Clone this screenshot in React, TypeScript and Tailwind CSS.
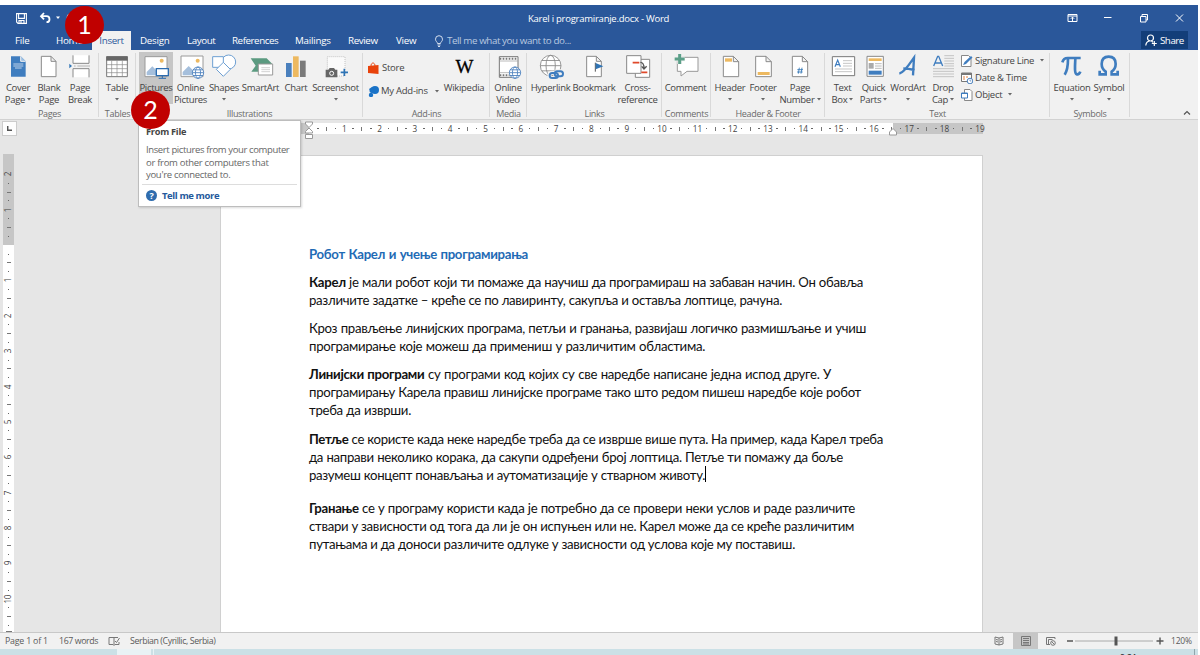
import React from "react";

type Kids = { children?: React.ReactNode };

const Icon = ({ x, children }: Kids & { x: number }) => (
  <svg className="h-[26px] w-[26px] shrink-0 overflow-visible" viewBox={`${x} 159 78 78`} fill="none" strokeWidth={3}>
    {children}
  </svg>
);

const Caret = ({ className = "" }: { className?: string }) => (
  <svg className={`inline-block h-[3px] w-[4px] shrink-0 ${className}`} viewBox="0 0 4 3">
    <path d="M0 0h4L2 2.6z" fill="#666" />
  </svg>
);

const Group = ({ label, w, children }: Kids & { label: string; w: string }) => (
  <div className={`relative flex h-[69px] shrink-0 flex-col ${w}`}>
    <div className="flex h-[57px] w-full">{children}</div>
    <div className="h-[12px] text-center text-[9px] leading-[13px] tracking-[-0.3px] text-[#6a6a6a]">{label}</div>
    <div className="absolute right-0 top-[3px] h-[64px] w-px bg-[#d9d9d9]" />
  </div>
);

const Btn = ({ w, a, b, arrow, active, children }: Kids & { w: string; a: string; b?: string; arrow?: boolean; active?: boolean }) => (
  <div className={`flex shrink-0 flex-col items-center ${active ? "mt-[2px] h-[52px] bg-[#c6c6c6] pt-[1px]" : "pt-[3px]"} ${w}`}>
    {children}
    <div className="mt-[2.5px] flex flex-col items-center whitespace-nowrap leading-[12.5px] tracking-[-0.3px]">
      <span>{a}</span>
      {b ? (
        <span>
          {b}
          {arrow && <Caret className="mb-[2px] ml-[2px]" />}
        </span>
      ) : (
        arrow && <Caret className="mt-[4px]" />
      )}
    </div>
  </div>
);

const Globe = ({ cx, cy, r, c = "#4a80bd" }: { cx: number; cy: number; r: number; c?: string }) => (
  <g stroke={c} strokeWidth={2.6}>
    <circle cx={cx} cy={cy} r={r} fill="#fff" />
    <ellipse cx={cx} cy={cy} rx={r * 0.45} ry={r} />
    <path d={`M${cx - r} ${cy}h${2 * r}M${cx - r * 0.87} ${cy - r * 0.5}h${r * 1.74}M${cx - r * 0.87} ${cy + r * 0.5}h${r * 1.74}`} />
  </g>
);

const hTicks = Array.from({ length: 76 }, (_, i) => i + 1);
const vTicks = Array.from({ length: 52 }, (_, i) => i - 8);

const Mark = ({ k, vertical }: { k: number; vertical?: boolean }) => {
  if (k === 0) return null;
  if (k % 4 === 0) return <span className={vertical ? "-rotate-90" : ""}>{Math.abs(k / 4)}</span>;
  if (k % 2 === 0) return <span className={vertical ? "h-px w-[4px] bg-[#777]" : "h-[4px] w-px bg-[#777]"} />;
  return <span className="h-px w-[1.5px] bg-[#666]" />;
};

const Line = ({ w, className = "", children }: Kids & { w: string; className?: string }) => (
  <div className={`h-[18.2px] whitespace-nowrap [text-align-last:justify] ${w} ${className}`}>{children}</div>
);

const Tab = ({ w, children }: Kids & { w: string }) => <span className={`shrink-0 whitespace-nowrap ${w}`}>{children}</span>;

export default function App() {
  return (
    <div className="relative flex h-[655px] w-[1200px] flex-col overflow-hidden bg-white pr-[2px] pt-[5px] font-['Open_Sans','Noto_Sans',sans-serif] text-[9.5px] tracking-[-0.25px] text-[#444]">
      <header className="flex h-[45px] shrink-0 flex-col bg-[#2a579a] text-white">
        <div className="flex h-[26px] items-center">
          <svg className="ml-[16px] h-[11px] w-[11px]" viewBox="0 0 11 11" fill="none" stroke="#fff" strokeWidth="1.1">
            <path d="M.6.6h9.8v9.8H2L.6 9zM2.6.6v4.8h5.8V.6M3 10.400V7.500h5v2.900M5 8v2" />
          </svg>
          <svg className="ml-[12px] h-[12px] w-[34px]" viewBox="0 0 34 12" fill="none" stroke="#fff" strokeWidth="1.8">
            <path d="M5 1L2 4.200l3 3.200M2 4.200h5.500c4 0 4 6 0 6" />
            <path d="M17 4.500h4l-2 2.500z" fill="#fff" stroke="none" />
            <path d="M31 2a4 4 0 0 0-1 7" strokeWidth="1.500" />
          </svg>
          <div className="ml-[455px] mt-[2px] w-[149px] whitespace-nowrap text-[9.5px]">Karel i programiranje.docx - Word</div>
          <svg className="ml-[390px] h-[12px] w-[118px]" viewBox="0 0 118 12" fill="none" stroke="#fff" strokeWidth="1">
            <path d="M1 2.500h9v7H1zM1 4h9M5.500 9V5.200M3.800 6.800l1.700-1.700 1.700 1.700M37 5.500h7.500M73.500 4.500h5.500v5.500h-5.500zM75 4V2.500h5.500V8H79M109 2.500l7 7M116 2.500l-7 7" />
          </svg>
        </div>
        <div className="flex h-[19px] text-[9.8px] leading-[19px]">
          <Tab w="ml-[15px] w-[41px]">File</Tab>
          <Tab w="w-[36px]">Home</Tab>
          <div className="w-[39px] shrink-0 bg-[#f1f1f1] text-center tracking-[-0.35px] text-[#2b579a]">Insert</div>
          <Tab w="ml-[9px] w-[47px]">Design</Tab>
          <Tab w="w-[45px] tracking-[-0.4px]">Layout</Tab>
          <Tab w="w-[63px] tracking-[-0.45px]">References</Tab>
          <Tab w="w-[53px]">Mailings</Tab>
          <Tab w="w-[48px] tracking-[-0.4px]">Review</Tab>
          <Tab w="w-[38px]">View</Tab>
          <svg className="mt-[4px] h-[12px] w-[10px]" viewBox="0 0 10 12" fill="none" stroke="#d5dfee">
            <path d="M3.500 8.500C3.500 7 1.500 6.500 1.500 4.200a3.500 3.500 0 0 1 7 0C8.500 6.500 6.500 7 6.500 8.500zM3.500 10h3M4 11.500h2" />
          </svg>
          <Tab w="ml-[3px] w-[130px] text-[#b9c9e0] tracking-[-0.42px]">Tell me what you want to do...</Tab>
          <div className="ml-[564px] flex h-[18px] w-[47px] items-center bg-[#133e79] pl-[4px] tracking-[-0.5px]">
            <svg className="mr-[3px] h-[12px] w-[12px]" viewBox="0 0 12 12" fill="none" stroke="#fff" strokeWidth="1.200">
              <circle cx="5.500" cy="4" r="3" />
              <path d="M.8 11.500C1 9 2.500 7.300 4.500 7M6.500 6.800l1.500 1.500M9.300 7v5M6.800 9.500h5" />
            </svg>
            Share
          </div>
        </div>
      </header>

      <section className="relative flex h-[70px] shrink-0 border-b border-[#d2d2d2] bg-[#f1f1f1]">
        <Group label="Pages" w="w-[99px]">
          <Btn w="w-[36px]" a="Cover" b="Page" arrow>
            <Icon x={15}>
              <path d="M33 169h29l15 15v46H33z" fill="#3f7dbf" />
              <path d="M62 169v15h15" fill="#9dc0e4" stroke="#f1f1f1" />
              <path d="M40 192h30M40 198h30M45 204h20" stroke="#fff" strokeWidth={2} />
            </Icon>
          </Btn>
          <Btn w="w-[26px]" a="Blank" b="Page">
            <Icon x={108}>
              <path d="M124 169h29l15 15v46h-44zM153 169v15h15" fill="#fff" stroke="#8a8a8a" />
            </Icon>
          </Btn>
          <Btn w="w-[36px]" a="Page" b="Break">
            <Icon x={201}>
              <path d="M219 166v24h48v-24M219 232v-26h48v26" fill="#fff" stroke="#8a8a8a" />
              <path d="M208 191l8 7-8 7z" fill="#2f74b5" />
              <path d="M222 198h5M232 198h38" stroke="#999" strokeWidth={2} />
            </Icon>
          </Btn>
        </Group>
        <Group label="Tables" w="w-[37px]">
          <Btn w="w-[36px]" a="Table" arrow>
            <Icon x={312}>
              <path d="M320 170h62v60h-62z" fill="#fff" stroke="#777" />
              <path d="M319 169h64v13h-64z" fill="#666" />
              <path d="M320 194h62M320 206h62M320 218h62M335 182v48M351 182v48M367 182v48" stroke="#888" strokeWidth={2} />
            </Icon>
          </Btn>
        </Group>
        <Group label="Illustrations" w="w-[227px]">
          <Btn w="ml-[3px] w-[34px]" a="Pictures" active>
            <Icon x={429}>
              <path d="M435 170h66v60h-66z" fill="#fff" stroke="#9a9a9a" />
              <circle cx="485" cy="182" r="6" fill="#edb960" />
              <path d="M440 226v-10l17-17 14 14v13z" fill="#a5bfdc" />
              <path d="M469 206h36v21h-36z" fill="#fff" stroke="#2b6cb0" strokeWidth={4} />
              <path d="M487 228v6M476 235h22" stroke="#2b6cb0" strokeWidth={3} />
            </Icon>
          </Btn>
          <Btn w="w-[35px]" a="Online" b="Pictures">
            <Icon x={532}>
              <path d="M541 168h66v62h-66z" fill="#fff" stroke="#9a9a9a" />
              <circle cx="591" cy="182" r="6" fill="#edb960" />
              <path d="M546 226v-10l18-18 18 18v10z" fill="#a5bfdc" />
              <Globe cx={592} cy={218} r={17} />
            </Icon>
          </Btn>
          <Btn w="w-[32px]" a="Shapes" arrow>
            <Icon x={633}>
              <circle cx="686" cy="186" r="21" fill="#fff" stroke="#6d9fd2" />
              <path d="M638 170h32v32h-32z" fill="#fff" stroke="#6d9fd2" />
              <path d="M670 187l21 21-21 21-21-21z" fill="#fff" stroke="#6d9fd2" />
            </Icon>
          </Btn>
          <Btn w="w-[41px]" a="SmartArt">
            <Icon x={742}>
              <path d="M750 175h48l17 17h-39v23h-24l13-18z" fill="#5b9a80" />
              <path d="M773 192h43v33h-43z" fill="#fff" stroke="#999" />
              <path d="M782 203h26M782 209h26M782 215h26" stroke="#bbb" strokeWidth={2} />
            </Icon>
          </Btn>
          <Btn w="w-[30px]" a="Chart">
            <Icon x={849}>
              <path d="M858 189h17v42h-17z" fill="#4a80bd" />
              <path d="M879 169h17v62h-17z" fill="#edb960" />
              <path d="M900 182h17v49h-17z" fill="#7a7a7a" />
            </Icon>
          </Btn>
          <Btn w="w-[49px]" a="Screenshot" arrow>
            <Icon x={67}>
              <path d="M80 170h53v58H80z" fill="#fafafa" stroke="#aaa" strokeDasharray="3 3" strokeWidth={2} />
              <path d="M75 209h8l4-5h13l4 5h6v23H75z" fill="#666" />
              <circle cx="93" cy="220" r="6" fill="#666" stroke="#fff" />
              <path d="M120 217h22M131 206v22" stroke="#2f74b5" strokeWidth={5} />
            </Icon>
          </Btn>
        </Group>
        <Group label="Add-ins" w="w-[127px]">
          <div className="flex w-[78px] shrink-0 flex-col pl-[5px] pt-[10px]">
            <div className="flex h-[16px] items-center">
              <svg className="mr-[3px] h-[13px] w-[11px]" viewBox="0 0 11 13">
                <path d="M0 4l10.500-1v9L0 11z" fill="#e8420b" />
                <path d="M3 4C3 0 7 0 7 4" fill="none" stroke="#e8420b" />
              </svg>
              Store
            </div>
            <div className="mt-[7px] flex h-[16px] items-center whitespace-nowrap">
              <svg className="mr-[2px] h-[11px] w-[11px] shrink-0" viewBox="0 0 11 11">
                <circle cx="7" cy="4" r="4" fill="#1a73c7" />
                <circle cx="3" cy="9" r="2.200" fill="#1a73c7" />
                <path d="M1 3l3-2 3 5-4 1z" fill="#1a73c7" />
                <circle cx="3" cy="5" r="1.500" fill="#1a73c7" />
              </svg>
              My Add-ins
              <Caret className="ml-[7px] mt-[1px]" />
            </div>
          </div>
          <Btn w="w-[46px]" a="Wikipedia">
            <div className="h-[26px] font-['Liberation_Serif',serif] text-[19px] leading-[27px] tracking-[-1px] text-black [-webkit-text-stroke:0.3px_black]">W</div>
          </Btn>
        </Group>
        <Group label="Media" w="w-[37px]">
          <Btn w="w-[36px]" a="Online" b="Video">
            <Icon x={585}>
              <path d="M598 170h56v62h-56z" fill="#fff" stroke="#777" />
              <path d="M599 176h54M599 226h30" stroke="#777" strokeWidth={6} strokeDasharray="5 4" />
              <path d="M599 183h54M599 218h30" stroke="#999" strokeWidth={2} />
              <Globe cx={645} cy={218} r={17} />
            </Icon>
          </Btn>
        </Group>
        <Group label="Links" w="w-[135px]">
          <Btn w="ml-[1px] w-[45px]" a="Hyperlink">
            <Icon x={712}>
              <Globe cx={750} cy={197} r={31} c="#888" />
              <g stroke="#f1f1f1" strokeWidth={12}>
                <rect x="746" y="218" width="25" height="16" rx="8" />
                <rect x="763" y="214" width="25" height="16" rx="8" />
              </g>
              <g stroke="#3f7dbf" strokeWidth={6}>
                <rect x="747" y="219" width="25" height="15" rx="7.500" />
                <rect x="762" y="214" width="25" height="15" rx="7.500" />
              </g>
            </Icon>
          </Btn>
          <Btn w="w-[42px]" a="Bookmark">
            <Icon x={843}>
              <path d="M860 169h29l15 15v46h-44zM889 169v15h15" fill="#fff" stroke="#8a8a8a" />
              <path d="M886 188v27" stroke="#555" />
              <path d="M887 189l23 10-23 9z" fill="#2f74b5" />
            </Icon>
          </Btn>
          <Btn w="w-[45px]" a="Cross-" b="reference">
            <Icon x={73}>
              <path d="M104 178h43v54h-43z" fill="#fff" stroke="#888" />
              <path d="M78 167h43v53H78z" fill="#fff" stroke="#888" />
              <path d="M96 188h20M122 217h18" stroke="#e0492a" strokeWidth={5} />
              <path d="M119 187c8 0 11 5 11 18M123 199l7 8 8-8" stroke="#555" strokeWidth={4} />
            </Icon>
          </Btn>
        </Group>
        <Group label="Comments" w="w-[49px]">
          <Btn w="w-[47px]" a="Comment">
            <Icon x={217}>
              <path d="M230 172h62v42h-33l-18 14v-14h-11z" fill="#fff" stroke="#999" />
              <path d="M222 177h30M237 162v30" stroke="#f1f1f1" strokeWidth={14} />
              <path d="M222 177h30M237 162v30" stroke="#5b9f88" strokeWidth={9} />
            </Icon>
          </Btn>
        </Group>
        <Group label="Header & Footer" w="w-[114px]">
          <Btn w="ml-[2px] w-[34px]" a="Header" arrow>
            <Icon x={351}>
              <path d="M370 169h30l16 16v45h-46zM400 169v16h16" fill="#fff" stroke="#8a8a8a" />
              <path d="M375 175h21v10h-21z" fill="#edb960" />
            </Icon>
          </Btn>
          <Btn w="w-[32px]" a="Footer" arrow>
            <Icon x={450}>
              <path d="M467 169h31l16 16v45h-47zM498 169v16h16" fill="#fff" stroke="#8a8a8a" />
              <path d="M473 216h36v9h-36z" fill="#edb960" />
            </Icon>
          </Btn>
          <Btn w="w-[42px]" a="Page" b="Number" arrow>
            <Icon x={561}>
              <path d="M577 169h30l16 16v45h-46zM607 169v16h16" fill="#fff" stroke="#8a8a8a" />
              <path d="M598 203l-3 18M606 203l-3 18M592 209h17M591 216h17" stroke="#2f74b5" strokeWidth={2.5} />
            </Icon>
          </Btn>
        </Group>
        <Group label="Text" w="w-[225px]">
          <Btn w="ml-[2px] w-[31px]" a="Text" b="Box" arrow>
            <Icon x={688}>
              <path d="M695 170h67v57h-67z" fill="#fff" stroke="#777" />
              <path d="M703 200l8-20 8 20M706 194h11" stroke="#3f7dbf" strokeWidth={3.5} />
              <path d="M727 182h27M727 190h27M727 198h27M703 207h51M703 215h51" stroke="#bbb" strokeWidth={2.5} />
            </Icon>
          </Btn>
          <Btn w="w-[31px]" a="Quick" b="Parts" arrow>
            <Icon x={781}>
              <path d="M799 169h49v60h-49z" fill="#fff" stroke="#888" />
              <path d="M804 175h39v8h-39z" fill="#edb960" />
              <path d="M804 189h15v17h-15z" fill="#aaa" />
              <path d="M823 191h20M823 198h20M823 205h20" stroke="#999" strokeWidth={2} />
              <path d="M804 212h39v12h-39z" fill="#3f7dbf" />
            </Icon>
          </Btn>
          <Btn w="w-[38px]" a="WordArt" arrow>
            <Icon x={-15}>
              <path d="M-2 221C12 218 30 190 42 173l-3 53M10 205c12 0 22 2 34 5" stroke="#3f7dbf" strokeWidth={7} />
            </Icon>
          </Btn>
          <Btn w="w-[32px]" a="Drop" b="Cap" arrow>
            <Icon x={90}>
              <path d="M101 198l12-29h3l12 29M105 189h18" stroke="#3f7dbf" strokeWidth={4} />
              <path d="M133 167h29M133 175h29M133 183h29M133 191h29M133 198h29M99 206h63M99 214h63M99 222h63M99 230h63" stroke="#bbb" strokeWidth={2.5} />
            </Icon>
          </Btn>
          <div className="flex shrink-0 flex-col whitespace-nowrap pl-[2px] pt-[2px] leading-[17px]">
            <div className="flex h-[17px] items-center">
              <svg className="mr-[2px] h-[12px] w-[12px]" viewBox="0 0 12 12" fill="none" stroke="#888">
                <path d="M.5.5h7l2.500 2.500v8.500H.5z" fill="#fff" />
                <path d="M2 10l1.500-3L10 1l1.500 1.500L5 9z" fill="#3f7dbf" stroke="none" />
              </svg>
              <span className="tracking-[-0.3px]">Signature Line</span>
              <Caret className="ml-[6px]" />
            </div>
            <div className="flex h-[17px] items-center">
              <svg className="mr-[2px] h-[12px] w-[12px]" viewBox="0 0 12 12" fill="none" stroke="#777">
                <path d="M.5 1h10v8.500H.5z" fill="#fff" />
                <path d="M.5 2h10" strokeWidth="2" />
                <path d="M2 5h2M5 5h2M2 7h2" stroke="#e08040" />
                <circle cx="9" cy="9" r="2.800" fill="#fff" stroke="#4a80bd" />
                <path d="M9 7.500V9h1.300" stroke="#4a80bd" strokeWidth=".7" />
              </svg>
              Date &amp; Time
            </div>
            <div className="flex h-[17px] items-center">
              <svg className="mr-[2px] h-[12px] w-[12px]" viewBox="0 0 12 12" fill="none" stroke="#888">
                <path d="M3.500.5h5.500l2 2v9H3.500z" fill="#fff" />
                <path d="M.5 4h6v5h-6z" fill="#fff" stroke="#3f7dbf" />
                <path d="M.5 4.500h6" stroke="#3f7dbf" />
              </svg>
              Object
              <Caret className="ml-[6px]" />
            </div>
          </div>
        </Group>
        <Group label="Symbols" w="w-[80px]">
          <Btn w="ml-[2px] w-[40px]" a="Equation" arrow>
            <Icon x={477}>
              <path d="M487 187c3-11 8-13 16-13h39M504 177c0 20-2 35-10 47M526 177c-1 20-3 44 4 46 5 1 9-2 11-8" stroke="#3f7dbf" strokeWidth={8} />
            </Icon>
          </Btn>
          <Btn w="w-[34px]" a="Symbol" arrow>
            <Icon x={588}>
              <path d="M599 212v11h18v-8c-8-6-12-14-12-23 0-14 8-22 21-22s21 8 21 22c0 9-4 17-12 23v8h18v-11" stroke="#3f7dbf" strokeWidth={8} />
            </Icon>
          </Btn>
        </Group>
        <svg className="ml-auto mr-[7px] mt-[60px] h-[6px] w-[8px]" viewBox="0 0 8 6" fill="none" stroke="#555" strokeWidth="1.200">
          <path d="M1 4.500l3-3 3 3" />
        </svg>
      </section>

      <main className="relative flex min-h-0 flex-1 flex-col bg-[#e6e6e6]">
        <div className="flex h-[34px] shrink-0">
          <div className="ml-[2px] mt-px flex h-[15px] w-[15px] items-center justify-center border border-[#ccc] bg-[#fdfdfd]">
            <svg className="h-[5px] w-[5px]" viewBox="0 0 5 5" fill="none" stroke="#555" strokeWidth="1.500">
              <path d="M.7 0v4.200H5" />
            </svg>
          </div>
          <div className="mt-[3px] ml-[203px] h-[11px] w-[89px] bg-[#c6c6c6]" />
          <div className="mt-[3px] flex h-[11px] w-[674px] items-center bg-[linear-gradient(90deg,#fff_584px,#c6c6c6_584px)] pl-[4.420px] text-[8.200px] leading-[11px] tracking-[0.1px]">
            {hTicks.map((k) => (
              <div key={k} className="flex h-full w-[8.840px] shrink-0 items-center justify-center">
                <Mark k={k} />
              </div>
            ))}
          </div>
        </div>
        <div className="flex min-h-0 flex-1">
          <div className="ml-[3px] flex w-[11px] shrink-0 flex-col overflow-hidden bg-[linear-gradient(180deg,#c6c6c6_91px,#fff_91px)] pt-[16px] text-[8.200px]">
            {vTicks.map((k) => (
              <div key={k} className="flex h-[8.850px] w-full shrink-0 items-center justify-center">
                <Mark k={k} vertical />
              </div>
            ))}
            <div className="mx-auto mt-[1px] h-[2px] w-[6px] shrink-0 bg-[#777]" />
          </div>
          <article className="ml-[206px] mt-[1px] w-[763px] shrink-0 border border-b-0 border-[#d0d0d0] bg-white pl-[88px] pt-[89px] font-['Lato','Open_Sans',sans-serif] text-[13.200px] leading-[18.200px] tracking-[-0.29px] text-[#111]">
            <Line w="w-[219px]" className="font-bold text-[#1f6bb5]">Робот Карел и учење програмирања</Line>
            <div className="mt-[9.5px]">
              <Line w="w-[554px]"><b>Карел</b> је мали робот који ти помаже да научиш да програмираш на забаван начин. Он обавља</Line>
              <Line w="w-[473px]">различите задатке – креће се по лавиринту, сакупља и оставља лоптице, рачуна.</Line>
            </div>
            <div className="mt-[9.5px]">
              <Line w="w-[557px]">Кроз прављење линијских програма, петљи и гранања, развијаш логичко размишљање и учиш</Line>
              <Line w="w-[396px]">програмирање које можеш да примениш у различитим областима.</Line>
            </div>
            <div className="mt-[10px]">
              <Line w="w-[522px]"><b>Линијски програми</b> су програми код којих су све наредбе написане једна испод друге. У</Line>
              <Line w="w-[552px]">програмирању Карела правиш линијске програме тако што редом пишеш наредбе које робот</Line>
              <Line w="w-[102px]">треба да изврши.</Line>
            </div>
            <div className="mt-[10px]">
              <Line w="w-[574px]"><b>Петље</b> се користе када неке наредбе треба да се изврше више пута. На пример, када Карел треба</Line>
              <Line w="w-[534px]">да направи неколико корака, да сакупи одређени број лоптица. Петље ти помажу да боље</Line>
              <div className="flex">
                <Line w="w-[396px]">разумеш концепт понављања и аутоматизације у стварном животу.</Line>
                <div className="h-[16px] w-px bg-black" />
              </div>
            </div>
            <div className="mt-[15px]">
              <Line w="w-[546px]"><b>Гранање</b> се у програму користи када је потребно да се провери неки услов и раде различите</Line>
              <Line w="w-[545px]">ствари у зависности од тога да ли је он испуњен или не. Карел може да се креће различитим</Line>
              <Line w="w-[486px]">путањама и да доноси различите одлуке у зависности од услова које му поставиш.</Line>
            </div>
          </article>
        </div>
        <svg className="absolute left-[304px] top-0 h-[20px] w-[10px]" viewBox="0 0 10 20" fill="#fff" stroke="#999">
          <path d="M1.500 2h7v2L5 7.500 1.500 4zM1.500 13V11.500L5 8l3.500 3.500V13zM1.500 14.500h7v4h-7z" />
        </svg>
        <svg className="absolute left-[888px] top-[7px] h-[9px] w-[10px]" viewBox="0 0 10 9" fill="#fff" stroke="#999">
          <path d="M1.500 8V5L5 1.500 8.500 5v3z" />
        </svg>
      </main>

      <footer className="flex h-[17px] shrink-0 items-center border-t border-[#c8c8c8] bg-[#f1f1f1] text-[8.800px] tracking-[-0.4px] text-[#5a5a5a]">
        <span className="ml-[5px] mt-px w-[54px] whitespace-nowrap tracking-[-0.200px]">Page 1 of 1</span>
        <span className="mt-px w-[49px] whitespace-nowrap">167 words</span>
        <svg className="h-[10px] w-[12px]" viewBox="0 0 12 10" fill="none" stroke="#777">
          <path d="M6 1.500H1v7h4l1 1 1-1h4V6M6 1.500V9M6 1.500h4M7 5l1.500 1.500L11.500 2" />
        </svg>
        <span className="ml-[10px] mt-px whitespace-nowrap">Serbian (Cyrillic, Serbia)</span>
        <svg className="ml-auto mr-[9px] h-[10px] w-[10px]" viewBox="0 0 10 10" fill="none" stroke="#777">
          <path d="M5 2L1 1v7l4 1 4-1V1zM5 2v7M2 3.500l2 .5M2 5.500l2 .5M6 4l2-.5M6 6l2-.5" />
        </svg>
        <div className="flex h-full w-[25px] items-center justify-center bg-[#c6c6c6]">
          <svg className="h-[10px] w-[10px]" viewBox="0 0 10 10" fill="none" stroke="#777">
            <path d="M.5.500h9v9h-9zM2 2.500h6M2 4.500h6M2 6.500h6M2 8h6" />
          </svg>
        </div>
        <svg className="ml-[8px] h-[10px] w-[10px]" viewBox="0 0 10 10" fill="none" stroke="#777">
          <path d="M9 3V1.500H.5v7H4M2.500 3.500v5M2.500 3.500h4" />
          <circle cx="7" cy="7" r="2.300" />
          <path d="M5.500 5.500l3 3" />
        </svg>
        <svg className="ml-[9px] h-[10px] w-[102px]" viewBox="0 0 102 10" fill="none" stroke="#555">
          <path d="M2 5h6M91.500 5h7M95 1.500v7" strokeWidth="1.400" />
          <path d="M10 5h78" stroke="#aaa" />
          <path d="M51 .5v9" strokeWidth="3" />
        </svg>
        <span className="ml-[4px] mt-px w-[27px] whitespace-nowrap text-[8.500px] tracking-[-0.200px]">120%</span>
      </footer>
      <div className="flex h-[6px] shrink-0 bg-[#cbe0e6]">
        <div className="ml-[117px] h-full w-[34px] bg-[#e9f2f5]" />
        <div className="ml-[2px] h-full w-px bg-[#e9f2f5]" />
        <div className="ml-auto mr-[3px] h-full w-px bg-[#8fa5ac]" />
      </div>
      <div className="absolute left-[1120px] top-[653px] h-[20px] text-[9px] leading-[9px] text-[#222]">9:21</div>

      <aside className="absolute left-[138px] top-[120px] flex h-[87px] w-[163px] flex-col border border-[#bdbdbd] bg-white px-[7px] text-[#666] shadow-[1px_1px_2px_rgba(0,0,0,0.15)]">
        <div className="mt-[4px] text-[9.200px] font-bold leading-[13px] text-[#444]">From File</div>
        <div className="mt-[6px] whitespace-nowrap text-[9.500px] leading-[12.600px] tracking-[-0.380px]">
          Insert pictures from your computer
          <br />
          <span className="tracking-[-0.300px]">or from other computers that</span>
          <br />
          <span className="tracking-[-0.300px]">you're connected to.</span>
        </div>
        <div className="-mx-[4px] mt-[2px] h-px bg-[#ddd]" />
        <div className="mt-[4px] flex items-center text-[9.500px] font-bold leading-[14px] tracking-[-0.400px] text-[#24599c]">
          <span className="mr-[5px] flex h-[11px] w-[11px] items-center justify-center rounded-full bg-[#2f6cae] text-[9px] leading-none text-white">?</span>
          Tell me more
        </div>
      </aside>
      <div className="absolute left-[65px] top-[6px] flex h-[38px] w-[39px] items-center justify-center rounded-full bg-[#c00000] font-['Lato',sans-serif] text-[25px] text-white">1</div>
      <div className="absolute left-[131px] top-[91px] flex h-[38px] w-[39px] items-center justify-center rounded-full bg-[#c00000] font-['Lato',sans-serif] text-[25px] text-white">2</div>
    </div>
  );
}
